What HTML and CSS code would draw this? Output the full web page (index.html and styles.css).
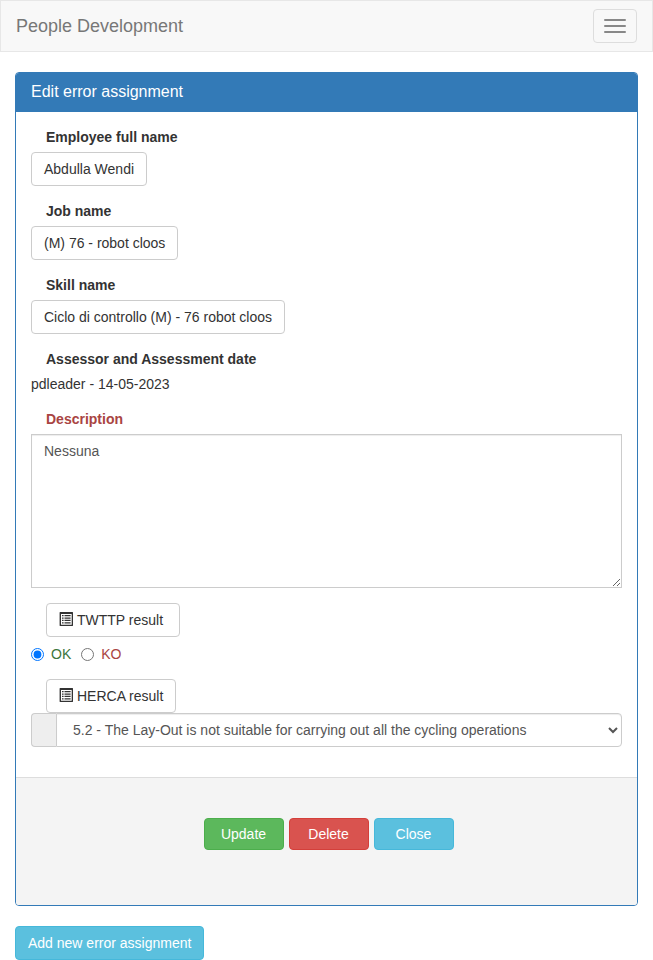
FILE: index.html
```html
<!DOCTYPE html>
<html lang="en">
<head>
<meta charset="utf-8">
<title>People Development</title>
<link rel="stylesheet" href="styles.css">
</head>
<body>
<nav class="navbar">
  <a class="brand">People Development</a>
  <button class="toggle" type="button" aria-label="Menu"><span></span><span></span><span></span></button>
</nav>
<main class="container">
  <form class="panel">
    <h3 class="panel-heading">Edit error assignment</h3>
    <div class="panel-body">
      <div class="group"><label class="label">Employee full name</label><button type="button" class="btn">Abdulla Wendi</button></div>
      <div class="group"><label class="label">Job name</label><button type="button" class="btn">(M) 76 - robot cloos</button></div>
      <div class="group"><label class="label">Skill name</label><button type="button" class="btn">Ciclo di controllo (M) - 76 robot cloos</button></div>
      <div class="group"><label class="label">Assessor and Assessment date</label><p class="static">pdleader - 14-05-2023</p></div>
      <div class="group"><label class="label error">Description</label><textarea class="textarea">Nessuna</textarea></div>
      <div class="group">
        <button type="button" class="btn indented twttp"><svg class="icon" viewBox="0 0 14 14"><path fill-rule="evenodd" d="M1 0h12.6q.4 0 .4.4V13.600q0 .4-.4.4H1q-.4 0-.4-.4V.4Q.6 0 1 0zM2 2v10.700h10.700V2z"/><path d="M3 3h1.600v1.300H3zM3 5.400h1.600v1.300H3zM3 7.800h1.600v1.300H3zM3 10.200h1.600v1.300H3zM5.500 3H11.600v1.300H5.500zM5.500 5.400H11.600v1.300H5.500zM5.500 7.800H11.600v1.300H5.500zM5.500 10.200H11.600v1.300H5.500z"/></svg><span>TWTTP result</span></button>
        <div class="radios">
          <label class="radio ok"><input type="radio" name="result" checked>OK</label>
          <label class="radio ko"><input type="radio" name="result">KO</label>
        </div>
      </div>
      <div class="group">
        <button type="button" class="btn indented herca"><svg class="icon" viewBox="0 0 14 14"><path fill-rule="evenodd" d="M1 0h12.6q.4 0 .4.4V13.600q0 .4-.4.4H1q-.4 0-.4-.4V.4Q.6 0 1 0zM2 2v10.700h10.700V2z"/><path d="M3 3h1.600v1.300H3zM3 5.400h1.600v1.300H3zM3 7.800h1.600v1.300H3zM3 10.200h1.600v1.300H3zM5.500 3H11.600v1.300H5.500zM5.500 5.400H11.600v1.300H5.500zM5.500 7.800H11.600v1.300H5.500zM5.500 10.200H11.600v1.300H5.500z"/></svg><span>HERCA result</span></button>
        <div class="input-group">
          <span class="addon"></span>
          <select class="select"><option>5.2 - The Lay-Out is not suitable for carrying out all the cycling operations</option></select>
        </div>
      </div>
    </div>
    <div class="panel-footer">
      <button type="button" class="btn action success">Update</button>
      <button type="button" class="btn action danger">Delete</button>
      <button type="button" class="btn action info">Close</button>
    </div>
  </form>
  <button type="button" class="btn info">Add new error assignment</button>
</main>
</body>
</html>
```
FILE: styles.css
```css
* { box-sizing: border-box; }
html { overflow: hidden; }
body {
  margin: 0;
  background: #fff;
  color: #333;
  font: 14px/20px "Liberation Sans", Arial, sans-serif;
}
button, textarea, select { font: inherit; }
.navbar {
  display: flex;
  align-items: center;
  justify-content: space-between;
  height: 52px;
  margin-bottom: 20px;
  padding: 0 15px;
  background: #f8f8f8;
  border: 1px solid #e7e7e7;
}
.brand { color: #777; font-size: 18px; }
.toggle {
  display: flex;
  flex-direction: column;
  gap: 4px;
  width: 44px;
  height: 34px;
  padding: 9px 10px;
  background: transparent;
  border: 1px solid #ddd;
  border-radius: 4px;
}
.toggle span { width: 22px; height: 2px; border-radius: 1px; background: #888; }
.container { padding: 0 15px; }
.panel {
  margin-bottom: 20px;
  border: 1px solid #337ab7;
  border-radius: 4px;
}
.panel-heading {
  height: 39px;
  margin: 0;
  padding: 10px 15px;
  border-radius: 3px 3px 0 0;
  background: #337ab7;
  color: #fff;
  font-size: 16px;
  font-weight: 400;
  line-height: 17.6px;
}
.panel-body { padding: 15px; }
.group { margin-bottom: 15px; }
.label { display: block; margin: 0 0 5px; padding-left: 15px; font-weight: 700; }
.error { color: #a94442; }
.btn {
  display: block;
  height: 34px;
  padding: 6px 12px;
  border: 1px solid #ccc;
  border-radius: 4px;
  background: #fff;
  color: #333;
  white-space: nowrap;
}
.static { margin: 0; }
.textarea {
  display: block;
  width: 100%;
  height: 154px;
  padding: 6px 12px;
  border: 1px solid #ccc;
  border-radius: 0;
  background: #fff;
  color: #555;
  box-shadow: inset 0 1px 1px rgba(0, 0, 0, .075);
}
.indented { display: flex; align-items: center; gap: 4px; margin-left: 15px; }
.twttp { width: 134px; }
.herca { width: 130px; }
.icon { width: 14px; height: 14px; flex: none; margin-bottom: 2px; fill: #333; }
.radios { display: flex; gap: 10px; padding-top: 7px; }
.radio { display: flex; align-items: center; }
.radio input { width: 13px; height: 13px; margin: 1px 7px 0 0; }
.ok { color: #3c763d; }
.ko { color: #a94442; }
.input-group { display: flex; height: 34px; }
.addon {
  width: 25px;
  border: 1px solid #ccc;
  border-right: 0;
  border-radius: 4px 0 0 4px;
  background: #eee;
}
.select {
  flex: 1;
  min-width: 0;
  height: 34px;
  padding: 6px 12px;
  border: 1px solid #ccc;
  border-radius: 0 4px 4px 0;
  background: #fff;
  color: #555;
  box-shadow: inset 0 1px 1px rgba(0, 0, 0, .075);
}
.panel-footer {
  display: flex;
  justify-content: center;
  gap: 5px;
  height: 128px;
  padding: 40px 13px 40px 17px;
  border-top: 1px solid #ddd;
  border-radius: 0 0 3px 3px;
  background: #f4f4f4;
}
.action { width: 80px; height: 32px; padding: 5px 0; }
.success { background: #5cb85c; border-color: #4cae4c; color: #fff; }
.danger { background: #d9534f; border-color: #d43f3a; color: #fff; }
.info { background: #5bc0de; border-color: #46b8da; color: #fff; }
```
